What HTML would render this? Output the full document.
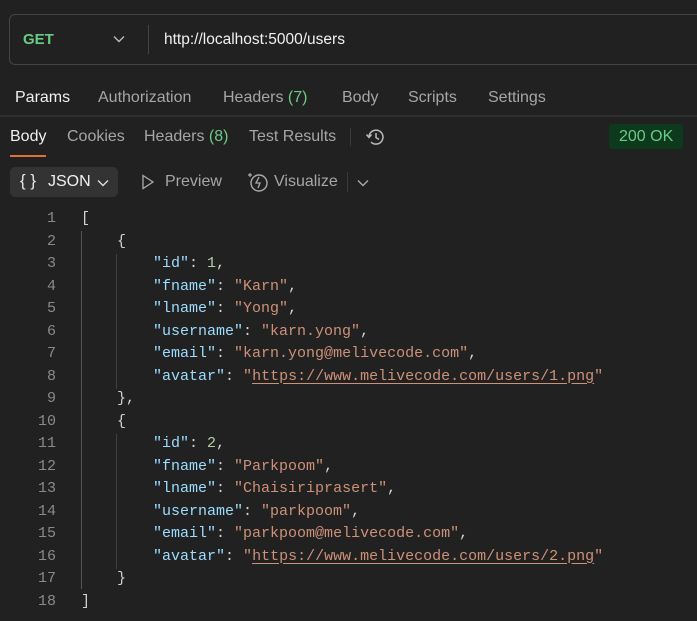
<!DOCTYPE html>
<html><head><style>
body{margin:0;width:697px;height:621px;background:#212121;overflow:hidden;font-family:"Liberation Sans",sans-serif;position:relative;color:#a6a6a6}
.a{position:absolute;white-space:pre}
.box{position:absolute;left:9px;top:14px;width:700px;height:51px;border:1px solid #444;border-radius:6px;box-sizing:border-box}
.t{font-size:16px}
.code{position:absolute;left:0;top:208px;font-family:"Liberation Mono",monospace;font-size:15px;line-height:22.5px}
.ln{position:absolute;left:20px;width:36px;text-align:right;color:#8a8a8a}
.k{color:#9cdcfe}.s{color:#ce9178}.n{color:#b5cea8}.p{color:#d4d4d4}.b{color:#d0d0d0}
.u{text-decoration:underline;text-underline-offset:3px}
</style></head><body>
<div class="box"></div>
<div class="a" style="left:23px;top:31px;font-size:15px;font-weight:bold;color:#6acb85">GET</div>
<svg class="a" style="left:113px;top:35px" width="12" height="8"><path d="M1 1.5l5 5 5-5" stroke="#bbb" stroke-width="1.4" fill="none"/></svg>
<div class="a" style="left:148px;top:25px;width:1px;height:29px;background:#444"></div>
<div class="a" style="left:164px;top:31px;font-size:15.5px;color:#f0f0f0">http://localhost:5000/users</div>

<div class="a t" style="left:15px;top:89px;color:#f0f0f0">Params</div>
<div class="a t" style="left:98px;top:89px">Authorization</div>
<div class="a t" style="left:223px;top:89px">Headers <span style="color:#6acb85">(7)</span></div>
<div class="a t" style="left:342px;top:89px">Body</div>
<div class="a t" style="left:408px;top:89px">Scripts</div>
<div class="a t" style="left:488px;top:89px">Settings</div>
<div class="a" style="left:0;top:115px;width:697px;height:2px;background:#2e2e2e"></div>

<div class="a t" style="left:10px;top:128px;color:#f0f0f0">Body</div>
<div class="a" style="left:10px;top:155px;width:36px;height:2px;background:#e0703a"></div>
<div class="a t" style="left:67px;top:128px">Cookies</div>
<div class="a t" style="left:144px;top:128px">Headers <span style="color:#6acb85">(8)</span></div>
<div class="a t" style="left:249px;top:128px">Test Results</div>
<div class="a" style="left:350px;top:128px;width:1px;height:18px;background:#3a3a3a"></div>
<svg class="a" style="left:365px;top:126px" width="22" height="22" viewBox="0 0 22 22"><path d="M4 11a7 7 0 1 1 2 5" stroke="#bbb" stroke-width="1.5" fill="none"/><path d="M1.5 8.5L4 11.5 6.5 8.5" stroke="#bbb" stroke-width="1.5" fill="none"/><path d="M11 7v4.5l3 2" stroke="#bbb" stroke-width="1.5" fill="none"/></svg>
<div class="a" style="left:609px;top:124px;width:74px;height:25px;background:#0d3a1c;border-radius:3px"></div>
<div class="a t" style="left:619px;top:128px;color:#6acb85">200 OK</div>

<div class="a" style="left:10px;top:167px;width:108px;height:30px;background:#333;border-radius:5px"></div>
<div class="a" style="left:20px;top:171px;font-size:17px;color:#e8e8e8">{ }</div>
<div class="a t" style="left:48px;top:173px;color:#f0f0f0">JSON</div>
<svg class="a" style="left:97px;top:179px" width="12" height="8"><path d="M1 1.5l5 5 5-5" stroke="#ddd" stroke-width="1.4" fill="none"/></svg>
<svg class="a" style="left:141px;top:174px" width="14" height="16"><path d="M2 1.5l10 6.5-10 6.5z" stroke="#aaa" stroke-width="1.3" fill="none"/></svg>
<div class="a t" style="left:165px;top:173px">Preview</div>
<svg class="a" style="left:247px;top:171px" width="22" height="22" viewBox="0 0 22 22"><circle cx="12" cy="12" r="8" stroke="#aaa" stroke-width="1.4" fill="none"/><path d="M12 6l-3 6h4l-2 5" stroke="#aaa" stroke-width="1.3" fill="none"/><path d="M3 2v4M1 4h4" stroke="#aaa" stroke-width="1.2"/></svg>
<div class="a t" style="left:274px;top:173px">Visualize</div>
<div class="a" style="left:347px;top:172px;width:1px;height:20px;background:#3a3a3a"></div>
<svg class="a" style="left:357px;top:179px" width="12" height="8"><path d="M1 1.5l5 5 5-5" stroke="#aaa" stroke-width="1.4" fill="none"/></svg>

<div class="a" style="left:81px;top:231px;width:1px;height:358px;background:#555"></div>
<div class="a" style="left:116px;top:254px;width:1px;height:135px;background:#404040"></div>
<div class="a" style="left:116px;top:434px;width:1px;height:135px;background:#404040"></div>

<div class="code">
<div class="ln" style="top:0">1</div><div class="ln" style="top:22.5px">2</div><div class="ln" style="top:45px">3</div><div class="ln" style="top:67.5px">4</div><div class="ln" style="top:90px">5</div><div class="ln" style="top:112.5px">6</div><div class="ln" style="top:135px">7</div><div class="ln" style="top:157.5px">8</div><div class="ln" style="top:180px">9</div><div class="ln" style="top:202.5px">10</div><div class="ln" style="top:225px">11</div><div class="ln" style="top:247.5px">12</div><div class="ln" style="top:270px">13</div><div class="ln" style="top:292.5px">14</div><div class="ln" style="top:315px">15</div><div class="ln" style="top:337.5px">16</div><div class="ln" style="top:360px">17</div><div class="ln" style="top:382.5px">18</div>
<div class="a" style="left:81px;top:0"><span class="b">[</span>
    <span class="b">{</span>
        <span class="k">"id"</span><span class="p">: </span><span class="n">1</span><span class="p">,</span>
        <span class="k">"fname"</span><span class="p">: </span><span class="s">"Karn"</span><span class="p">,</span>
        <span class="k">"lname"</span><span class="p">: </span><span class="s">"Yong"</span><span class="p">,</span>
        <span class="k">"username"</span><span class="p">: </span><span class="s">"karn.yong"</span><span class="p">,</span>
        <span class="k">"email"</span><span class="p">: </span><span class="s">"karn.yong@melivecode.com"</span><span class="p">,</span>
        <span class="k">"avatar"</span><span class="p">: </span><span class="s">"<span class="u">https://www.melivecode.com/users/1.png</span>"</span>
    <span class="b">}</span><span class="p">,</span>
    <span class="b">{</span>
        <span class="k">"id"</span><span class="p">: </span><span class="n">2</span><span class="p">,</span>
        <span class="k">"fname"</span><span class="p">: </span><span class="s">"Parkpoom"</span><span class="p">,</span>
        <span class="k">"lname"</span><span class="p">: </span><span class="s">"Chaisiriprasert"</span><span class="p">,</span>
        <span class="k">"username"</span><span class="p">: </span><span class="s">"parkpoom"</span><span class="p">,</span>
        <span class="k">"email"</span><span class="p">: </span><span class="s">"parkpoom@melivecode.com"</span><span class="p">,</span>
        <span class="k">"avatar"</span><span class="p">: </span><span class="s">"<span class="u">https://www.melivecode.com/users/2.png</span>"</span>
    <span class="b">}</span>
<span class="b">]</span></div>
</div>
</body></html>
